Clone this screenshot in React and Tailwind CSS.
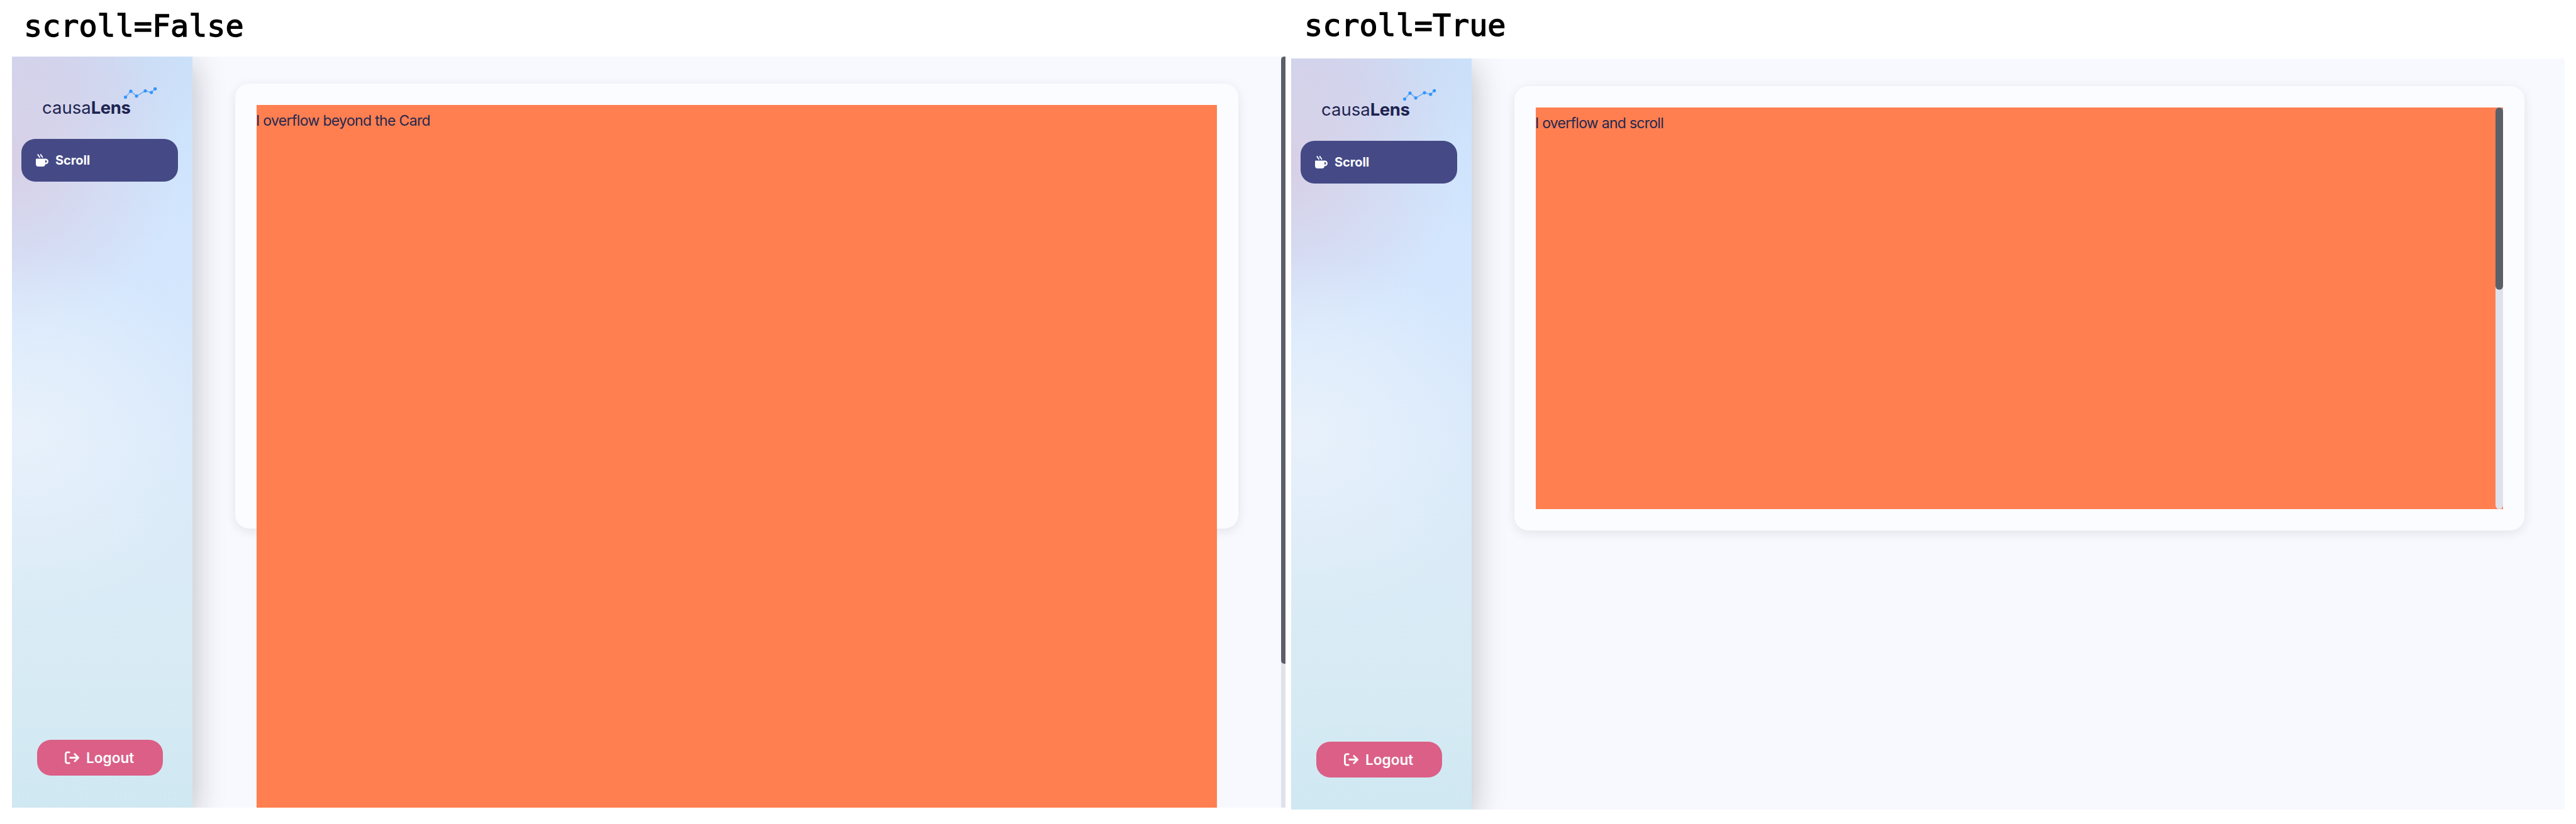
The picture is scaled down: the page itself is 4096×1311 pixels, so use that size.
import { FaMugHot, FaArrowRightFromBracket } from "react-icons/fa6";

const points = [
  [3.5, 16.6],
  [12, 7.2],
  [21.1, 14.8],
  [35, 6.6],
  [44.7, 9.1],
  [50.7, 3.3],
];

function Logo() {
  return (
    <div className="relative ml-[48px] mt-[64px] h-[34px] whitespace-nowrap text-[27.5px] leading-[34px] text-[#1e2450]">
      <span>causa</span>
      <span className="font-bold tracking-[-0.4px]">Lens</span>
      <svg className="absolute -top-[16px] left-[129px] h-[22px] w-[56px]" viewBox="0 0 56 22">
        <polyline points={points.map((p) => p.join(",")).join(" ")} fill="none" stroke="#62acf7" strokeWidth="1.4" />
        {points.map(([x, y]) => (
          <circle key={x} cx={x} cy={y} r="2.6" fill="#3495fb" />
        ))}
      </svg>
    </div>
  );
}

function Sidebar() {
  return (
    <aside className="relative z-10 flex h-full w-[287px] shrink-0 flex-col bg-[radial-gradient(110%_24%_at_8%_50%,#e8f1fb_0%,#e8f1fb00_100%),radial-gradient(100%_23%_at_-5%_14%,#d8cfe5_0%,#d8cfe500_100%),radial-gradient(100%_14%_at_15%_2%,#d0d4ee_0%,#d0d4ee00_100%),linear-gradient(180deg,#cae3fb_0%,#d3e6fe_25%,#d9e9fb_50%,#daebf7_65%,#d8ebf4_82%,#cfe8f2_100%)] shadow-[2px_14px_46px_rgba(20,20,30,0.26)]">
      <Logo />
      <div className="ml-[15px] mt-[33px] flex h-[68px] w-[249px] items-center rounded-[22px] bg-[#454a86] pl-[23px] text-[#fbfcff]">
        <FaMugHot className="size-[20px]" />
        <span className="ml-[11px] text-[20px] font-bold tracking-[-0.1px]">Scroll</span>
      </div>
      <div className="mb-[51px] ml-[40px] mt-auto flex h-[57px] w-[200px] items-center rounded-[22px] bg-[#db5f86] pl-[44px] text-[#fbfcff]">
        <FaArrowRightFromBracket className="size-[23px]" />
        <span className="ml-[11px] text-[22.6px] font-semibold">Logout</span>
      </div>
    </aside>
  );
}

export default function App() {
  return (
    <div className="flex h-[1311px] w-[4096px] overflow-hidden bg-white font-['Inter',sans-serif] text-[#242850]">
      <section className="ml-[19px] w-[2025px]">
        <h1 className="h-[90px] pl-[19px] pt-[13px] font-['DejaVu_Sans_Mono',monospace] text-[48.4px] leading-[57px] text-black [-webkit-text-stroke:1.4px_black]">
          scroll=False
        </h1>
        <div className="flex h-[1195px] overflow-hidden bg-[#f7f9fe]">
          <Sidebar />
          <main className="h-full flex-1 pl-[68px] pt-[43px]">
            <div className="h-[708px] w-[1595px] rounded-[22px] bg-[#fbfcff] p-[34px] shadow-[0_4px_18px_rgba(0,0,0,0.09)]">
              <div className="h-[1300px] bg-[#ff7f50] pt-[8px] text-[23px] leading-[34px] tracking-[-0.66px]">
                <p className="-ml-[1px]">I overflow beyond the Card</p>
              </div>
            </div>
          </main>
          <div className="h-full w-[7px] bg-[#dfe2eb]">
            <div className="h-[966px] rounded-l-[5px] bg-[#5b5f68]" />
          </div>
        </div>
      </section>
      <section className="ml-[9px] w-[2025px]">
        <h1 className="h-[93px] pl-[21px] pt-[12px] font-['DejaVu_Sans_Mono',monospace] text-[48.4px] leading-[57px] text-black [-webkit-text-stroke:1.4px_black]">
          scroll=True
        </h1>
        <div className="flex h-[1195px] overflow-hidden bg-[#f7f9fe]">
          <Sidebar />
          <main className="h-full flex-1 pl-[68px] pt-[44px]">
            <div className="h-[707px] w-[1606px] rounded-[22px] bg-[#fbfcff] p-[34px] shadow-[0_4px_18px_rgba(0,0,0,0.09)]">
              <div className="relative h-full bg-[#ff7f50] pt-[8px] text-[23px] leading-[34px] tracking-[-0.72px]">
                <p className="-ml-[1px]">I overflow and scroll</p>
                <div className="absolute inset-y-0 right-0 w-[12px] rounded-full bg-[#dfe2eb]">
                  <div className="h-[290px] rounded-full bg-[#5b5f68]" />
                </div>
              </div>
            </div>
          </main>
        </div>
      </section>
    </div>
  );
}
